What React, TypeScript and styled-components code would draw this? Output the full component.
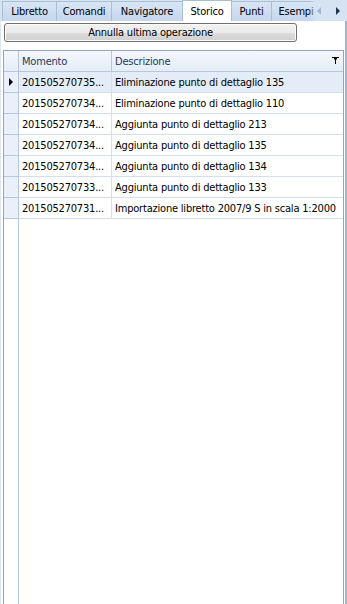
import React from 'react';
import styled, { createGlobalStyle } from 'styled-components';

const GlobalStyle = createGlobalStyle`
  html, body {
    margin: 0;
    padding: 0;
    background: #ffffff;
  }
  body {
    font-family: Tahoma, 'DejaVu Sans Condensed', 'Liberation Sans', sans-serif;
    font-size: 11px;
    letter-spacing: -0.2px;
    color: #000;
  }
`;

const Window = styled.div`
  width: 347px;
  height: 604px;
  display: flex;
  flex-direction: column;
  overflow: hidden;
  background: #fff;
`;

const TabStrip = styled.div`
  height: 21px;
  display: flex;
  align-items: flex-end;
  background: #d6e3f3;
  padding-left: 2px;
  position: relative;
  flex-shrink: 0;
`;

const Tab = styled.div<{ active?: boolean; w: number }>`
  width: ${p => p.w}px;
  flex-shrink: 0;
  height: ${p => (p.active ? 21 : 20)}px;
  box-sizing: border-box;
  display: flex;
  align-items: center;
  justify-content: center;
  border: 1px solid #a9bfd6;
  border-bottom: none;
  margin-right: -1px;
  background: ${p => (p.active ? '#ffffff' : 'linear-gradient(#d9e5f4, #c4d6ee)')};
  color: #000;
  white-space: nowrap;
  position: relative;
  z-index: ${p => (p.active ? 2 : 1)};
`;

const Arrows = styled.div`
  position: absolute;
  right: 0;
  top: 0;
  width: 38px;
  height: 21px;
  display: flex;
  align-items: center;
  justify-content: space-around;
  background: linear-gradient(90deg, rgba(214, 227, 243, 0) 0px, #d6e3f3 8px);
  z-index: 3;
`;

const Arrow = styled.span<{ dim?: boolean }>`
  width: 0;
  height: 0;
  border-top: 4px solid transparent;
  border-bottom: 4px solid transparent;
  ${p => (p.dim ? 'border-right: 4px solid #a6b6ca;' : 'border-left: 4px solid #1c3556;')}
`;

const Panel = styled.div`
  flex: 1;
  display: flex;
  flex-direction: column;
  border-right: 2px solid #9db3d6;
  border-left: 1px solid #dbe4f1;
  min-height: 0;
`;

const ButtonRow = styled.div`
  padding: 2px 0 0 3px;
  height: 27px;
  flex-shrink: 0;
`;

const Button = styled.button`
  width: 293px;
  height: 19px;
  padding: 0;
  border: 1px solid #707070;
  border-radius: 3px;
  background: linear-gradient(#f2f2f2 0%, #ebebeb 50%, #dddddd 51%, #cfcfcf 100%);
  font-family: inherit;
  font-size: 11px;
  letter-spacing: -0.2px;
  color: #000;
  box-shadow: inset 0 0 0 1px #fbfbfb;
`;

const Grid = styled.div`
  margin: 0 1px 0 2px;
  flex: 1;
  border: 1px solid #8fa6c8;
  border-bottom: none;
  display: flex;
  flex-direction: column;
  min-height: 0;
`;

const Row = styled.div<{ header?: boolean }>`
  display: grid;
  grid-template-columns: 15px 93px 1fr;
  height: 21px;
  flex-shrink: 0;
`;

const Cell = styled.div<{ header?: boolean; selected?: boolean; indicator?: boolean }>`
  box-sizing: border-box;
  display: flex;
  align-items: center;
  padding-left: 3px;
  white-space: nowrap;
  overflow: hidden;
  border-right: 1px solid ${p => (p.header || p.indicator ? '#b5c7e0' : '#d3dff0')};
  border-bottom: 1px solid ${p => (p.header || p.indicator ? '#b5c7e0' : '#d3dff0')};
  background: ${p =>
    p.header
      ? 'linear-gradient(#f4f7fc, #e5ecf7)'
      : p.indicator
      ? '#eaf0f9'
      : p.selected
      ? '#e4ecf8'
      : '#ffffff'};
  color: ${p => (p.header ? '#1e395b' : '#000')};
  position: relative;
  &:last-child {
    border-right: none;
  }
`;

const Ellip = styled.span`
  overflow: hidden;
  text-overflow: ellipsis;
  white-space: nowrap;
  display: block;
  width: 100%;
`;

const RowArrow = styled.span`
  width: 0;
  height: 0;
  border-top: 4px solid transparent;
  border-bottom: 4px solid transparent;
  border-left: 4px solid #000;
  margin-left: 2px;
`;

const FilterIcon = styled.svg`
  position: absolute;
  right: 4px;
  top: 6px;
`;

const Filler = styled.div`
  flex: 1;
  display: grid;
  grid-template-columns: 15px 1fr;
`;

const FillerIndicator = styled.div`
  border-right: 1px solid #b5c7e0;
`;

const rows = [
  ['201505270735...', 'Eliminazione punto di dettaglio 135'],
  ['201505270734...', 'Eliminazione punto di dettaglio 110'],
  ['201505270734...', 'Aggiunta punto di dettaglio 213'],
  ['201505270734...', 'Aggiunta punto di dettaglio 135'],
  ['201505270734...', 'Aggiunta punto di dettaglio 134'],
  ['201505270733...', 'Aggiunta punto di dettaglio 133'],
  ['201505270731...', 'Importazione libretto 2007/9 S in scala 1:2000'],
];

const tabs: [string, number][] = [
  ['Libretto', 55],
  ['Comandi', 56],
  ['Navigatore', 72],
  ['Storico', 50],
  ['Punti', 41],
  ['Esempi', 50],
];

export default function App() {
  return (
    <Window>
      <GlobalStyle />
      <TabStrip>
        {tabs.map(([t, w]) => (
          <Tab key={t} w={w} active={t === 'Storico'}>
            {t}
          </Tab>
        ))}
        <Arrows>
          <Arrow dim />
          <Arrow />
        </Arrows>
      </TabStrip>
      <Panel>
        <ButtonRow>
          <Button>Annulla ultima operazione</Button>
        </ButtonRow>
        <Grid>
          <Row header>
            <Cell header />
            <Cell header>Momento</Cell>
            <Cell header>
              Descrizione
              <FilterIcon width="7" height="7" viewBox="0 0 7 7">
                <path d="M0 0H7V1H5V2L4 3V7H3V3L2 2V1H0Z" fill="#000" />
              </FilterIcon>
            </Cell>
          </Row>
          {rows.map((r, i) => (
            <Row key={i}>
              <Cell indicator>{i === 0 && <RowArrow />}</Cell>
              <Cell selected={i === 0}>
                <Ellip>{r[0]}</Ellip>
              </Cell>
              <Cell selected={i === 0}>{r[1]}</Cell>
            </Row>
          ))}
          <Filler>
            <FillerIndicator />
          </Filler>
        </Grid>
      </Panel>
    </Window>
  );
}
